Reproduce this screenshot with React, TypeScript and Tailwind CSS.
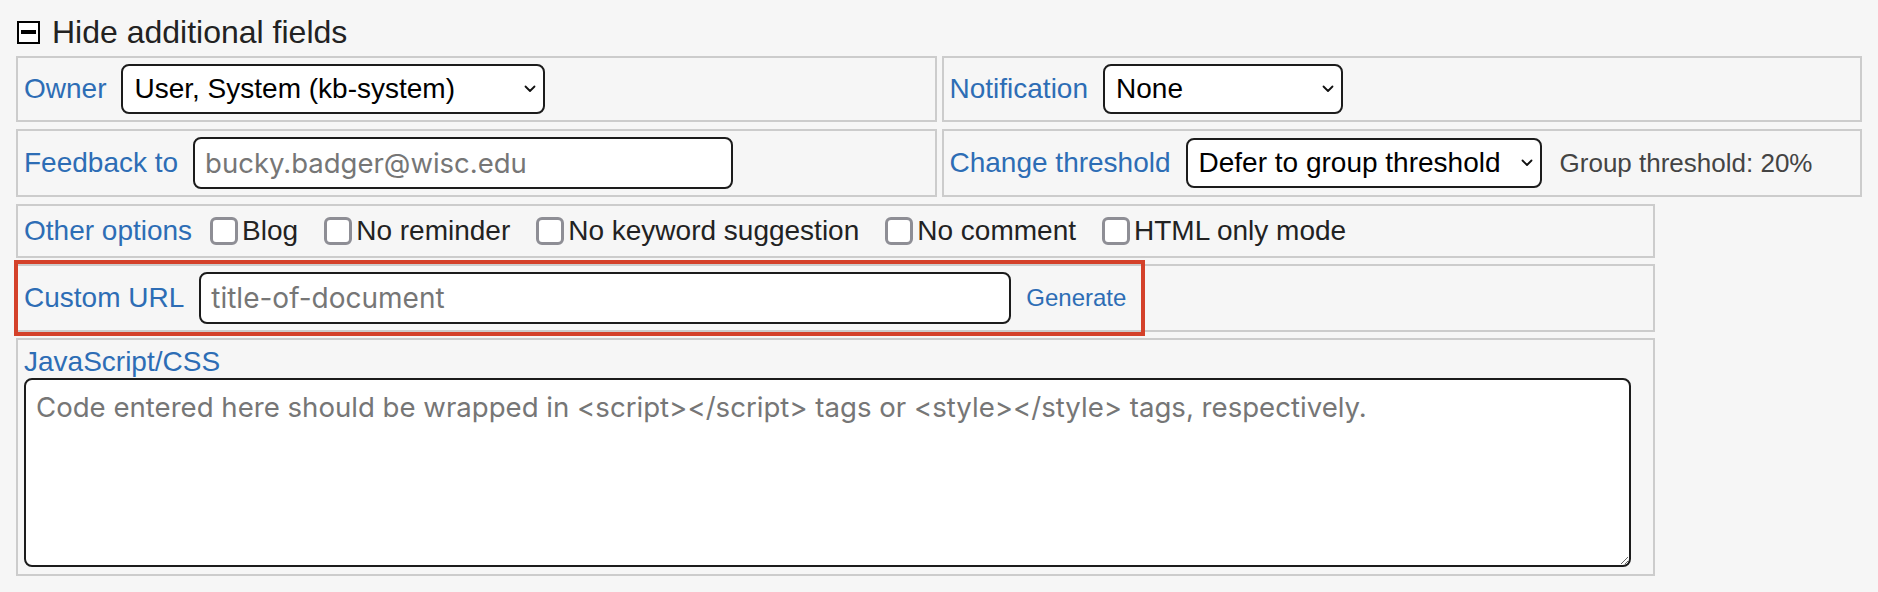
import React from "react";

const SANS = "font-['Liberation_Sans',Arial,sans-serif]";

function Chevron() {
  return (
    <svg
      width="12"
      height="8"
      viewBox="0 0 12 8"
      className="pointer-events-none absolute right-[9px] top-1/2 -translate-y-1/2"
    >
      <path
        d="M1.5 1.5 L6 6 L10.5 1.5"
        fill="none"
        stroke="#111"
        strokeWidth="1.8"
        strokeLinecap="round"
        strokeLinejoin="round"
      />
    </svg>
  );
}

function Select({ value, className }: { value: string; className: string }) {
  return (
    <div className={`relative ${className}`}>
      <select
        defaultValue={value}
        className={`appearance-none w-full h-full rounded-[8px] border-2 border-[#1c1c1c] bg-white pl-[11px] pr-[30px] text-[28px] text-black outline-none ${SANS}`}
      >
        <option>{value}</option>
      </select>
      <Chevron />
    </div>
  );
}

function Label({ children }: { children: React.ReactNode }) {
  return <span className="text-[28px] leading-[32px] text-[#2d6db5] whitespace-nowrap">{children}</span>;
}

function Check({ label }: { label: string }) {
  return (
    <label className="flex items-center mr-[26px]">
      <span className="block w-[28px] h-[28px] rounded-[6px] border-[3px] border-[#8e8e95] bg-white" />
      <span className="ml-[4px] text-[28px] leading-[32px] text-[#222]">{label}</span>
    </label>
  );
}

const panel = "border-2 border-[#cccccc] bg-[#f6f6f6] flex items-center px-[6px]";

export default function App() {
  return (
    <div className={`w-[1878px] h-[592px] bg-[#f6f6f6] ${SANS}`}>
      <div className="h-[56px] pt-[8px] pl-[17px] flex items-center">
        <span className="flex items-center justify-center w-[23px] h-[23px] border-2 border-black bg-white">
          <span className="block w-[15px] h-[4px] bg-black" />
        </span>
        <span className="ml-[12px] text-[32px] leading-[36px] text-[#222]">Hide additional fields</span>
      </div>

      <div className="px-[16px] flex flex-col">
        <div className="h-[66px] flex gap-[5px]">
          <div className={`${panel} flex-1`}>
            <Label>Owner</Label>
            <Select value="User, System (kb-system)" className="ml-[15px] w-[424px] h-[50px]" />
          </div>
          <div className={`${panel} flex-1`}>
            <Label>Notification</Label>
            <Select value="None" className="ml-[15px] w-[240px] h-[50px]" />
          </div>
        </div>

        <div className="mt-[7px] h-[68px] flex gap-[5px]">
          <div className={`${panel} flex-1`}>
            <Label>Feedback to</Label>
            <input
              placeholder="bucky.badger@wisc.edu"
              className={`ml-[15px] w-[540px] h-[52px] rounded-[8px] border-2 border-[#1c1c1c] bg-white px-[10px] text-[27.5px] text-black placeholder:text-[#767676] outline-none font-['Inter',sans-serif]`}
            />
          </div>
          <div className={`${panel} flex-1`}>
            <Label>Change threshold</Label>
            <Select value="Defer to group threshold" className="ml-[15px] w-[356px] h-[50px]" />
            <span className="ml-[18px] text-[26px] text-[#444] whitespace-nowrap">Group threshold: 20%</span>
          </div>
        </div>

        <div className={`${panel} mt-[7px] h-[54px] w-[1639px]`}>
          <Label>Other options</Label>
          <div className="ml-[18px] flex items-center">
            <Check label="Blog" />
            <Check label="No reminder" />
            <Check label="No keyword suggestion" />
            <Check label="No comment" />
            <Check label="HTML only mode" />
          </div>
        </div>

        <div className={`${panel} relative mt-[6px] h-[68px] w-[1639px]`}>
          <Label>Custom URL</Label>
          <input
            placeholder="title-of-document"
            className={`ml-[15px] w-[812px] h-[52px] rounded-[8px] border-2 border-[#1c1c1c] bg-white px-[10px] text-[28px] text-black placeholder:text-[#767676] outline-none font-['Inter',sans-serif]`}
          />
          <span className="ml-[15px] text-[24px] text-[#2d6db5]">Generate</span>
          <div className="pointer-events-none absolute left-[-4px] top-[-6px] w-[1131px] h-[76px] border-[4px] border-[#d4412a]" />
        </div>

        <div className="mt-[6px] h-[238px] w-[1639px] border-2 border-[#cccccc] bg-[#f6f6f6] flex flex-col px-[6px] pt-[6px]">
          <Label>JavaScript/CSS</Label>
          <textarea
            placeholder="Code entered here should be wrapped in <script></script> tags or <style></style> tags, respectively."
            className={`w-[1607px] h-[189px] rounded-[8px] border-2 border-[#1c1c1c] bg-white pl-[10px] pr-[10px] pt-[11px] pb-[9px] text-[27.6px] leading-[32px] text-black placeholder:text-[#767676] outline-none font-['Inter',sans-serif]`}
          />
        </div>
      </div>
    </div>
  );
}
